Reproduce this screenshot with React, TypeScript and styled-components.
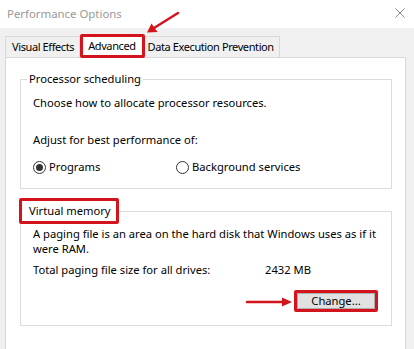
import React from 'react';
import styled, { createGlobalStyle } from 'styled-components';

const GlobalStyle = createGlobalStyle`
  html, body {
    margin: 0;
    padding: 0;
    background: #f0f0f0;
  }
  body {
    font-family: 'Noto Sans', 'Open Sans', sans-serif;
    font-size: 11.2px;
    color: #000;
  }
`;

const RED = '#d3141d';

const App = () => {
  return (
    <Window>
      <GlobalStyle />
      <TitleBar>
        <Title>Performance Options</Title>
        <CloseIcon viewBox="0 0 10 10">
          <path d="M0.5 0.5 L9.5 9.5 M9.5 0.5 L0.5 9.5" />
        </CloseIcon>
      </TitleBar>

      <Body>
        <TabRow>
          <Tab>Visual Effects</Tab>
          <Tab $active $marked>
            Advanced
          </Tab>
          <Tab>Data Execution Prevention</Tab>
        </TabRow>

        <Panel>
          <GroupBox $padTop={8}>
            <Legend>Processor scheduling</Legend>
            <Line>Choose how to allocate processor resources.</Line>
            <Line $top={21}>Adjust for best performance of:</Line>
            <RadioRow>
              <RadioOption>
                <Radio $checked />
                Programs
              </RadioOption>
              <RadioOption>
                <Radio />
                Background services
              </RadioOption>
            </RadioRow>
          </GroupBox>

          <GroupBox $gap={9}>
            <Legend $marked>Virtual memory</Legend>
            <Paragraph>
              A paging file is an area on the hard disk that Windows uses as if it
              <br />
              were RAM.
            </Paragraph>
            <SizeRow>
              <span>Total paging file size for all drives:</span>
              <SizeValue>2432 MB</SizeValue>
            </SizeRow>
            <ButtonRow>
              <Marked>
                <Button>Change...</Button>
              </Marked>
            </ButtonRow>
          </GroupBox>
        </Panel>
      </Body>

      <Annotations viewBox="0 0 414 349">
        <line x1="178" y1="13" x2="154" y2="28" />
        <polygon points="147,32.5 151.5,23.5 157.5,32" />
        <line x1="247" y1="302" x2="284" y2="302" />
        <polygon points="292,302 282,297.5 282,306.5" />
      </Annotations>
    </Window>
  );
};

export default App;

const Window = styled.div`
  position: relative;
  width: 414px;
  height: 349px;
  overflow: hidden;
  background: #f0f0f0;
`;

const TitleBar = styled.div`
  height: 28px;
  display: flex;
  align-items: center;
  justify-content: space-between;
  padding: 0 9px 2px 7px;
  box-sizing: border-box;
  background: #fff;
`;

const Title = styled.div`
  color: #999;
  font-size: 11.4px;
`;

const CloseIcon = styled.svg`
  width: 10px;
  height: 10px;
  stroke: #8a8a8a;
  stroke-width: 1;
  fill: none;
`;

const Body = styled.div`
  padding: 6px 8px 0 5px;
`;

const TabRow = styled.div`
  display: flex;
  align-items: flex-end;
  height: 23px;
  position: relative;
  z-index: 1;
`;

const Tab = styled.div<{ $active?: boolean; $marked?: boolean }>`
  box-sizing: border-box;
  height: ${({ $active }) => ($active ? 24 : 21)}px;
  margin-bottom: ${({ $active }) => ($active ? -1 : 0)}px;
  padding: 0 5px 0 3px;
  display: flex;
  align-items: center;
  font-size: 11px;
  letter-spacing: -0.4px;
  background: ${({ $active }) => ($active ? '#fff' : '#f0f0f0')};
  border: 1px solid #d9d9d9;
  border-bottom: none;
  line-height: 16px;
  white-space: nowrap;
  &:first-child {
    padding-left: 6px;
  }
  & + & {
    border-left: none;
  }
  ${({ $marked }) =>
    $marked &&
    `
    && {
      padding: 0 6px 0 5px;
      border: 3px solid ${RED};
      border-radius: 2px;
    }
  `}
`;

const Panel = styled.div`
  background: #fff;
  border: 1px solid #d9d9d9;
  border-bottom: none;
  height: 300px;
  padding: 13px 13px 0 14px;
`;

const GroupBox = styled.fieldset<{ $gap?: number; $padTop?: number }>`
  margin: ${({ $gap }) => $gap ?? 0}px 0 0 0;
  padding: ${({ $padTop }) => $padTop ?? 0}px 12px 13px 12px;
  border: 1px solid #dcdcdc;
  min-width: 0;
`;

const Legend = styled.legend<{ $marked?: boolean }>`
  line-height: 16px;
  margin-left: ${({ $marked }) => ($marked ? -14 : -6)}px;
  padding: ${({ $marked }) => ($marked ? '2px 5px 2px 7px' : '0 2px')};
  border: ${({ $marked }) => ($marked ? `3px solid ${RED}` : 'none')};
  border-radius: 2px;
`;

const Line = styled.div<{ $top?: number }>`
  line-height: 16px;
  margin-top: ${({ $top }) => $top ?? 0}px;
`;

const RadioRow = styled.div`
  display: flex;
  margin-top: 11px;
  line-height: 16px;
`;

const RadioOption = styled.label`
  display: flex;
  align-items: center;
  gap: 3px;
  width: 143px;
`;

const Radio = styled.span<{ $checked?: boolean }>`
  box-sizing: border-box;
  width: 13px;
  height: 13px;
  border-radius: 50%;
  border: 1px solid #333;
  background: #fff;
  display: inline-flex;
  align-items: center;
  justify-content: center;
  &::after {
    content: '';
    width: 7px;
    height: 7px;
    border-radius: 50%;
    background: ${({ $checked }) => ($checked ? '#333' : 'transparent')};
  }
`;

const Paragraph = styled.p`
  margin: 0;
  line-height: 15px;
  padding-top: 2px;
  white-space: nowrap;
`;

const SizeRow = styled.div`
  display: flex;
  margin-top: 6px;
  line-height: 16px;
`;

const SizeValue = styled.span`
  margin-left: auto;
  width: 114px;
`;

const ButtonRow = styled.div`
  display: flex;
  justify-content: flex-end;
  margin-top: 12px;
  padding-right: 1px;
`;

const Marked = styled.div`
  border: 3px solid ${RED};
  border-radius: 2px;
  display: flex;
`;

const Button = styled.button`
  box-sizing: border-box;
  width: 78px;
  height: 16px;
  padding: 0;
  border: 1px solid #adadad;
  background: #e1e1e1;
  font-family: inherit;
  font-size: 11.2px;
  line-height: 14px;
  color: #000;
`;

const Annotations = styled.svg`
  position: absolute;
  inset: 0;
  width: 414px;
  height: 349px;
  pointer-events: none;
  z-index: 5;
  line {
    stroke: ${RED};
    stroke-width: 2.5;
    stroke-linecap: round;
  }
  polygon {
    fill: ${RED};
  }
`;
